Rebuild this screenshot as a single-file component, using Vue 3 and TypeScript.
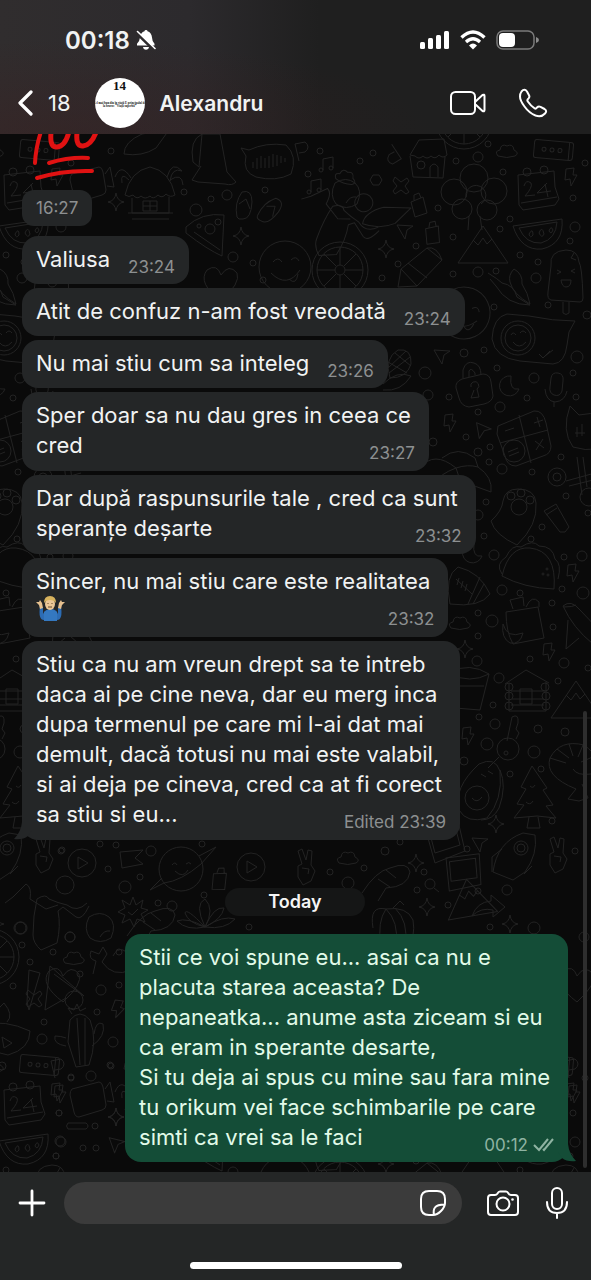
<script setup lang="ts">
interface Message {
  lines: string[]
  time: string
  edited?: boolean
  shrug?: boolean
}

const received: Message[] = [
  { lines: ['Valiusa'], time: '23:24' },
  { lines: ['Atit de confuz n-am fost vreodată'], time: '23:24' },
  { lines: ['Nu mai stiu cum sa inteleg'], time: '23:26' },
  { lines: ['Sper doar sa nu dau gres in ceea ce', 'cred'], time: '23:27' },
  { lines: ['Dar după raspunsurile tale , cred ca sunt', 'speranțe deșarte'], time: '23:32' },
  { lines: ['Sincer, nu mai stiu care este realitatea', ''], time: '23:32', shrug: true },
  {
    lines: [
      'Stiu ca nu am vreun drept sa te intreb',
      'daca ai pe cine neva, dar eu merg inca',
      'dupa termenul pe care mi l-ai dat mai',
      'demult, dacă totusi nu mai este valabil,',
      'si ai deja pe cineva, cred ca at fi corect',
      'sa stiu si eu...',
    ],
    time: '23:39',
    edited: true,
  },
]

const sent: Message = {
  lines: [
    'Stii ce voi spune eu... asai ca nu e',
    'placuta starea aceasta? De',
    'nepaneatka... anume asta ziceam si eu',
    'ca eram in sperante desarte,',
    'Si tu deja ai spus cu mine sau fara mine',
    'tu orikum vei face schimbarile pe care',
    'simti ca vrei sa le faci',
  ],
  time: '00:12',
}

const head = (m: Message): string => m.lines.slice(0, -1).join('\n')
const tail = (m: Message): string => m.lines[m.lines.length - 1]

/* Wallpaper: line doodles centred on their own origin, repeated as a tile. */
const ring = (x: number, y: number, r: number): string =>
  `M${x - r} ${y}a${r} ${r} 0 1 0 ${2 * r} 0a${r} ${r} 0 1 0 ${-2 * r} 0`

const shapes: Record<string, string> = {
  star: 'M0-9Q1-1 8 0Q1 1 0 9Q-1 1-8 0Q-1-1 0-9Z',
  bolt: 'M-5-8L3-9L2-2L6-2L0 9L-1 2L-6 3Z',
  cursor: 'M-8-6L8-5L2-1L0 8Z',
  cloud: 'M-9 5Q-13 0-7-1Q-6-8 0-5Q6-8 7-1Q13 2 8 5Q0 8-9 5Z',
  moon: 'M2-9A10 10 0 1 0 10 4Q0 6 2-9Z',
  note: 'M-4 5V-6L6-8V3' + ring(-6, 5, 2) + ring(4, 3, 2),
  cross: 'M-6-9L0-4L6-8L8-5L4 0L8 6L5 8L0 4L-6 8L-8 5L-4 0L-8-5Z',
  hex: 'M-3-5L3-5L6 0L3 5L-3 5L-6 0Z',
  box: 'M-17-9Q-19-9-19-6V7Q-19 9-17 9H17Q20 9 20 6V-7Q20-9 17-9ZM16-9V9' + ring(-9, 0, 2) + ring(-1, 0, 2) + ring(7, 0, 2),
  calendar:
    'M-19-16L17-20L18-4L22 8L18 14L-14 19L-18 14ZM-16 12L20 6M-13-5Q-11-12-6-8Q-4-4-12 5L-2 4M10-8L0 2L14 0M8-7L11 6' +
    ring(-10, -19, 4) + ring(7, -21, 4),
  melon: 'M-25-4L24-11Q26 14 4 19Q-17 21-25-4ZM-19-2L19-8Q18 9 3 13Q-12 14-19-2M-9 4Q-5-3-5 5Q-8 9-9 4M1 3Q4-5 6 4Q4 9 1 3M11 1Q13-5 15 0Q13 5 11 1',
  hut: 'M-25 6Q-20-18 0-22Q20-18 25 6Q20 9 16 5Q12 10 8 6Q3 11 0 7Q-5 11-9 7Q-13 11-17 6Q-21 9-25 6M-18 9V24H19V8M-22 24H23M-18 30H19M-7 12H7V22H-7ZM0 12V22M-7 17H7M-21-9Q-30-18-28-6M-19-11Q-29-27-35-12M17-12Q22-29 32-18Q22-22 20-8M20-9Q32-17 33-4',
  tree: ring(0, -14, 14) + ring(-20, 0, 13) + ring(20, -1, 13) + ring(-12, 17, 10) + ring(13, 18, 10) + 'M-8 5A10 10 0 1 1 7 12M-5 24L-6 38M6 24L8 38',
  slice: 'M-18 10Q-18-2 0-10L27-14L14 4Q0 13-18 10Z',
  wave: 'M-25-12L-17-10Q0-18 20-15Q32-4 25 14Q10 22-10 17Q-24 12-20-4ZM-13 2V8M-9-2V9M-5-4V8M-1-2V8M3-4V8M7-6V7M11-5V6M15-4V3M19-2V2',
  dress: 'M-10-28Q-23-22-19 0L-13 5L-10-28L8-28L15 10L24 20Q20 24 13 22L-14 20L-20 18L-11 4',
  shop: 'M-17-1L-8-16L17-17L20-1Q16 3 12-1Q8 4 4 0Q0 4-4 0Q-8 4-12 0ZM-17 0L-14 21L16 22L18 1M3 21V11Q7 5 11 11V21' + ring(-6, 9, 4),
  wheel: ring(0, 0, 28) + ring(0, 0, 23) + ring(0, 0, 5) + 'M0-23V-5M0 5V23M-23 0H-5M5 0H23M-16-16L-4-4M16-16L4-4M-16 16L-4 4M16 16L4 4',
  pencil: 'M-22 19L-19 1L7-20Q17-22 22-8L-3 18ZM-19 1L-3 18M7-20L22-8M-12-5L7 10',
  peak: 'M-25 17L0-20L25 17ZM-10-6L-5-1L0-8L4-2L9-7',
  pop: 'M-15-12Q-17-27 0-28Q12-28 13-16Q16-12 17 20Q17 24 14 24L-15 22Q-19 21-18 14ZM-3 24V35Q0 38 3 35V24M-9-8L-5-6L-9-4M9-9L5-7L9-5M-5 2H5Q5 9 0 9Q-4 9-5 2M8-25L5-20L10-18',
  chili: 'M-24-14Q-14-8-10-4Q2-2 5 10L18 18Q-5 18-16-1L-22-8M2-18Q11-13 10-3Q16 6 18 17Q1 7-2-5Q-4-12 2-18Z',
  face: ring(0, 0, 26) + 'M-12-5Q-7-11-3-5M6-7Q11-12 14-6M-14 6Q2 22 15 3M4 12Q11 19 13 7',
  chat: 'M-26-23Q-40-20-41 2Q-38 21-13 24L20 27Q32 26 34 8L36-5L42-16Q20-16-4-21Z' + ring(-15, 1, 17) + ring(-15, 1, 13) + 'M-22-2Q-20-6-17-2M-13-4Q-10-8-7-4M-20 5Q-14 13-7 5M6 17L10 21L17 14M12 19L20 13',
  corn: 'M-9 12Q-15-8-1-16Q13-18 12-2Q8 12-9 12M-11 2L7-15M-10 7L11-9M-11-4L8 7M-4-13L12 0M-16 18Q-2 4 12 10Q2 26-16 24',
  lock: 'M-18 1Q-19-5-12-8L9-13Q16-13 17-5L19 9Q18 15 10 17L-5 20Q-13 19-15 11ZM-11-9V-17Q-8-27 0-24Q7-22 7-12M-5-10V-16Q-3-20 1-14V-12M-3 0A4 4 0 1 1 3 2L5 10L-3 11L0 3',
  mic: 'M-6-9Q-5-15 1-14Q7-13 6-6L5 4Q3 10-3 8Q-8 6-7 0ZM-12 2Q-11 14-2 15Q8 14 10 4M-3 15V20',
  calc: 'M-27-10L9-25Q18-26 21-13L26 10Q26 18 18 20L-9 30Q-18 30-20 20L-28-2ZM-6-21L6 27M-25 7L23-6M9-13L18-16M12-19L15-9M10 5L19 12M18 3L11 14M-20-5L-11-8M-17 16L-7 12M-16 20L-6 16' + ring(-11, 15, 11),
  cat: 'M-18 16Q-30 0-21-25L-12-16Q0-19 10-16L19-24L20 8Q8 24-18 16M-14-4V6M-9-7V5M-16 2L-6 2',
  brolly: 'M-38 0Q-24-18-2 0Q-18 6-22 14M-16-10Q0-23 17-10L20-1Q10-4-2 0M20-1Q35 9 33 24L0 12M-2 0L8 30',
  paw: 'M-22 8Q-11-2-10-12Q-8-24 5-24Q22-24 23-10Q25 12 4 32Q-18 22-22 8Z' + ring(6, -6, 8) + ring(-2, -17, 4) + ring(8, -20, 4) + ring(17, -13, 4),
  skate: ring(-20, 0, 9) + ring(-20, 0, 4) + ring(12, 20, 9) + 'M-11 4L18-4M-8 9L16 3M0-20L5 18M6-20L10 10',
  tube: 'M-12-7L0-14L13 9L9 14L4 14ZM-10-3L1-10',
  rugby: 'M-16 12Q-22-16-8-25Q14-20 24 2Q14 16-16 12M2 12L14-15M7 12L18-8M-10-13L6 2M-7-14L-9-7M-3-11L-5-4M1-8L-1-1',
  taco: 'M-27 5Q-20-25 1-23Q28-20 25 18Q-5 17-27 5ZM-27 3Q-34-7-23-14Q-17-27-8-24Q4-32 10-25Q24-25 26-12Q33-7 29 8' + ring(14, 3, 1) + ring(18, -2, 1) + ring(19, 4, 1),
  bag: 'M-17-12L15-17L21 14L-10 20Q-17 8-17-12M-10-15L-13-24L0-27L1-18M3-17Q9-30 16-22V-17M-20 0Q-16 15 0 9Q-3 21-13 19Q-22 14-20 0',
  plane: 'M-20-18Q-12-25-3-14L18 8L28 28L10 20Q-10 4-20-18ZM-15-4L-17 25L-4 14M-19-17Q-10-17-7-19',
  cabin: 'M-21-8L0-22L23-9M-17-9V19H20V-10M-15-1H19M-14 7H18M-15 13H18M-6-3H6V12H-6Z' + ring(-17, -5, 4) + ring(-17, 4, 4) + ring(-17, 14, 4) + ring(19, -5, 4) + ring(20, 4, 4) + ring(20, 14, 4),
  bucket: 'M-20-14Q0-24 19-12L10 24L-15 22ZM-20-12Q0-2 19-12M-18 0H14',
  key: 'M-4 0L1-24Q8-28 7-18L5-12L8-8L5-2' + ring(-3, 8, 11) + ring(-5, 12, 2) + 'M-12 16L-23 27',
  avocado: 'M-20 24Q-26 2 0-22Q16-30 21-15Q24 14 8 32Q-12 38-20 24ZM21-16Q28 0 20 22Q14 34 2 34M2-12L7-9M9-15L14-12' + ring(-2, 12, 12) + 'M-7 12Q-2 18 3 11',
  pine: 'M0-28L15-6L11-4L21 11L14 12L24 24L5 22L-18 24L-8 11L-15 10L-6-5L-11-7ZM-3 23L-5 34H8L6 23M-2-8Q1-5 3-9M-6 8Q-2 12 1 7',
  shrimp: 'M5 18Q-27 5-21-13Q-11-32 13-26Q33-12 20 3Q6 5 2-2M5 18L-3 28L8 30L17 27L11 13M-21-13L-5-8M-14-22L-2-13M-2-27L2-15M12-26L7-14M24-15L10-9',
  rocket: 'M-24 18Q-20-12 6-21L18-19Q21 0 8 18L-4 26ZM-15-5L-25 3V18M7 20L15 12' + ring(4, -6, 7) + ring(4, -6, 4),
  peace: 'M-8 10L-8-1L-4-3L-8-16L-4-18L0-7L2-17L6-16L5-2L9 4L5 14L-3 18ZM-4 1L3 2L2 7',
  photo: 'M-18-10L14-20L21 10L-9 22ZM-14-7L11-15L16 4L-9 12Z',
  flag: 'M-11-8L12-10L4-2L12 4L-9 8Z',
  planet: ring(0, 0, 22) + 'M-17 14L-31 21L-19 9M18-13L35-22L20-5Q0 12-17 14M-9-4Q-6-8-4-4M5-5Q8-8 10-5M-6 2Q2 10 7 1',
  play: ring(0, 0, 14) + 'M-4-6L6 0L-4 6Z',
  burst: 'M0-15L3-7L10-12L8-4L15-2L8 2L12 10L4 7L1 15L-3 7L-11 11L-8 3L-15 0L-8-4L-11-12L-3-7ZM-5 0L-1 3L5-3',
  plant: 'M0 12Q-18 2-28 6Q-18 16 0 12M0 12Q-19-8-20-2Q-17 8 0 12M0 12Q-11-11 0-16Q10-6 0 12M0 12Q9-9 19-7Q17 4 0 12M0 12Q18 0 30 4Q20 15 0 12',
  runner: 'M-42-8L-34-14L-21-27Q-15-24-17-12L-1-2L11-6M-14 24Q-14 4-10-12Q-1-18 2-12Q11-8 20-6Q30 2 40-8M-14 24Q-14 32-6 39L10 32Q14 15 11 0L16-4L29 6Q35 10 42-5' + ring(18, -26, 9),
  apple: 'M-11-12Q0-19 9-12Q17-5 11 9Q0 16-10 9Q-17 0-11-12M0 8Q4 1 10 2',
  whale: 'M-20 12L-17-1Q-25-3-22-11L-14-8L-10-15L-6-8L-11 0Q0 16 18 8Q22-8 10-12Q4-14 0-6',
  fans: 'M-25-22L-14-19L-25 18L-27 10ZM-9 18L-4-26L30 4L0-18M-9 18L12 6' + ring(20, 8, 9),
  cactus: 'M-10-20Q0-32 10-20Q18 0 9 25L-4 27L-12 2ZM-3-22L0 25M5-22L5 25M-14 6Q-27 4-25-4Q-19-4-14-2M14-6Q16-20 23-16Q26-4 12 6M-8-26L-12-32L-6-30L-3-36L0-29L6-32',
  drop: 'M-20-6Q0-12 26 0Q26 18 4 24L-12 20ZM-6-10Q-10-20 0-28Q10-16 3-9M-2 6L8 12L0 17Z',
  video: 'M-16-10L11-17Q14-17 15-12L18 6Q18 10 14 11L-9 18Q-13 18-14 13L-18-4Q-18-8-16-10M17-10L22-17L26 3L19 2',
  pumpkin: 'M-20 6Q-24-17-7-13Q14-16 20-2Q23 16 14 22M-7-13Q-16 0-12 22M-7-13Q6 0 3 22M2-14Q16 0 12 22M0-14L7-21L11-17',
  lens: ring(0, 0, 5) + 'M4 4L9 8',
  arrow: 'M-14 10Q-9-4 5-5V-11L19 1L7 11V4Q-5 1-14 10Z',
  sandal: 'M-7 12Q-10-2-2-13Q8-16 8-3Q7 14-1 14Q-6 15-7 12M-5-1L2-6L6 4',
  pizza: 'M-22-10Q-6-25 16-22L14 19Q0 13-22-4ZM-14-5L12 13' + ring(2, -8, 5) + ring(-9, -11, 2),
  heart: 'M0 18Q-24 0-14-13Q-4-20 0-8Q8-20 16-10Q20 0 0 18Z',
  perfume: 'M-7-3L5-8L9 8L-3 12ZM-4-5L-4-10L1-12L3-7',
  letter: 'M-4 9L-8-8L2-10Q8-5 2 0L-4 1',
  pill: 'M-10-3H8Q12 0 8 3H-10Q-13 0-10-3',
  shoe: 'M-28 12Q-14-10 0-13Q18-20 20-9Q18 6-4 7L-12 20M-12-2L0 6M-4-11L6-3',
}

type Spot = [name: string, x: number, y: number, turn?: number]

const spots: Spot[] = [
  ['box', 553, 151, 5], ['calendar', 537, 192], ['melon', 538, 231], ['hut', 150, 190], ['tree', 474, 193],
  ['bolt', 571, 178], ['slice', 142, 145], ['wave', 266, 161], ['dress', 212, 163], ['shop', 427, 157],
  ['wheel', 464, 122], ['note', 327, 166], ['note', 315, 188], ['letter', 303, 153], ['letter', 391, 155, 160],
  ['hex', 376, 181], ['cross', 401, 187], ['cloud', 507, 152], ['perfume', 418, 206], ['cloud', 346, 178, 20],
  ['apple', 346, 196], ['slice', 382, 218, 10], ['runner', 338, 222, 20],
  ['star', 116, 203], ['star', 241, 237], ['sandal', 244, 206], ['sandal', 270, 211, 35], ['video', 88, 185],
  ['pizza', 208, 238], ['heart', 221, 284], ['face', 285, 268], ['wheel', 340, 271], ['pencil', 420, 269],
  ['peak', 483, 247], ['pop', 566, 279], ['chili', 512, 288], ['face', 464, 314, 20], ['chat', 533, 338],
  ['star', 386, 250], ['cursor', 405, 232], ['perfume', 432, 234, 10], ['corn', 399, 367], ['cursor', 442, 357], ['lock', 474, 388],
  ['moon', 509, 386], ['mic', 557, 388], ['bolt', 450, 424], ['cursor', 482, 432, 20], ['calc', 525, 437],
  ['cat', 591, 432], ['brolly', 458, 469], ['skate', 577, 478], ['paw', 513, 514], ['tube', 556, 519],
  ['rugby', 466, 593], ['moon', 472, 553], ['taco', 529, 572], ['bag', 523, 625], ['plane', 583, 625],
  ['bolt', 573, 574], ['bolt', 549, 653], ['star', 465, 650], ['cloud', 460, 624], ['bucket', 470, 687],
  ['cabin', 526, 693], ['peak', 576, 702], ['bolt', 468, 737], ['key', 511, 742], ['avocado', 479, 787],
  ['pine', 532, 795], ['shrimp', 571, 772], ['star', 496, 825], ['cursor', 480, 845], ['rocket', 517, 855],
  ['peace', 558, 856], ['photo', 444, 842], ['star', 416, 864], ['cloud', 348, 859], ['peace', 306, 868],
  ['photo', 462, 872, 10], ['lens', 430, 885], ['peak', 470, 900, -10], ['arrow', 486, 907], ['star', 427, 908],
  ['star', 510, 925], ['shoe', 390, 882], ['pumpkin', 393, 923], ['runner', 47, 912], ['play', 82, 864],
  ['flag', 131, 861], ['planet', 181, 870], ['play', 251, 868], ['perfume', 219, 880, 20], ['burst', 133, 913],
  ['plant', 205, 916], ['apple', 100, 930], ['wheel', -9, 958], ['cloud', 74, 959], ['whale', 113, 963],
  ['fans', 54, 993], ['cactus', 80, 1041], ['drop', 4, 1032], ['cursor', 116, 1146, 10], ['star', 116, 1118],
  ['pill', 78, 1127], ['shoe', 155, 925], ['bolt', 118, 1010, 15], ['cross', 548, 1000],
  ['letter', 573, 1070], ['bolt', 574, 1095], ['heart', 577, 985],
]

const dots: [number, number, number][] = [
  [320, 152, 3], [373, 154, 3], [360, 162, 3], [308, 175, 3], [488, 145, 3], [478, 158, 5], [456, 162, 3], [503, 173, 3],
  [585, 164, 3], [573, 199, 3], [575, 228, 5], [510, 220, 3], [500, 230, 3], [438, 209, 3], [184, 193, 3], [211, 200, 3],
  [227, 196, 5], [196, 211, 6], [218, 223, 3], [265, 191, 3], [111, 152, 3], [416, 247, 3], [453, 238, 3], [382, 279, 3],
  [398, 265, 3], [453, 275, 3], [478, 273, 5], [496, 272, 3], [520, 256, 3], [538, 263, 3], [536, 279, 5], [494, 308, 3],
  [548, 306, 3], [570, 242, 3], [587, 316, 4], [233, 258, 5], [253, 264, 3], [263, 281, 3], [425, 374, 6], [464, 354, 4],
  [484, 351, 3], [497, 369, 3], [534, 379, 5], [573, 374, 3], [577, 358, 6], [576, 398, 3], [527, 399, 3], [428, 396, 5],
  [449, 398, 3], [500, 408, 5], [478, 413, 3], [466, 438, 3], [433, 443, 4], [490, 448, 3], [478, 453, 4], [502, 470, 5],
  [489, 463, 3], [561, 458, 3], [532, 473, 3], [486, 503, 3], [478, 516, 5], [484, 537, 3], [566, 497, 3], [588, 514, 3],
  [542, 528, 3], [531, 540, 3], [494, 556, 5], [564, 558, 3], [582, 557, 5], [502, 591, 5], [520, 594, 3], [562, 590, 3],
  [583, 594, 6], [552, 604, 3], [478, 614, 3], [492, 622, 6], [553, 628, 3], [478, 637, 3], [530, 660, 3], [564, 664, 5],
  [477, 662, 5], [588, 669, 3], [499, 679, 5], [558, 682, 3], [493, 706, 3], [479, 718, 3], [495, 725, 5], [538, 730, 4],
  [565, 733, 4], [487, 745, 6], [534, 753, 6], [510, 775, 3], [541, 770, 3], [464, 762, 4], [552, 822, 3], [467, 850, 3],
  [575, 852, 3], [385, 852, 4], [400, 843, 3], [100, 845, 3], [116, 846, 3], [62, 851, 3], [151, 852, 5], [202, 845, 3],
  [108, 870, 3], [140, 878, 3], [125, 888, 6], [158, 904, 3], [172, 907, 5], [204, 896, 3], [249, 928, 3], [330, 873, 3],
  [364, 869, 3], [348, 884, 6], [417, 891, 3], [424, 873, 3], [478, 892, 3], [507, 891, 5], [448, 906, 3], [490, 928, 3],
  [534, 929, 6], [21, 929, 6], [70, 938, 5], [22, 946, 3], [53, 953, 3], [119, 953, 3], [30, 963, 3], [80, 975, 3],
  [13, 987, 3], [101, 991, 5], [119, 986, 3], [97, 1013, 3], [44, 1023, 3], [42, 1040, 5], [113, 1043, 5], [110, 1066, 3],
  [71, 1078, 3], [91, 1077, 5], [2, 1067, 4], [59, 1114, 3], [95, 1127, 3], [60, 1142, 5], [83, 1149, 3], [96, 1149, 3],
  [56, 1157, 3], [584, 938, 5],
]

const copies = [
  { x: 0, y: 0 },
  { x: -514, y: 0 },
  { x: 0, y: 915 },
  { x: -514, y: 915 },
]
</script>

<template>
  <div class="phone">
    <header class="top">
      <div class="status">
        <div class="clock">
          <span>00:18</span>
          <svg width="20" height="22" viewBox="0 0 20 22" aria-label="Silent">
            <path d="M10 1Q11.500 1 11.500 2.300Q15.500 3.500 16 8.500Q16 12 18.500 14.800V16.500H1V14.800Q3.700 12 4 8.500Q4.500 3.500 8.500 2.300Q8.500 1 10 1ZM7 18H13Q12.500 20.800 10 20.800Q7.500 20.800 7 18Z" fill="#fff" />
            <path d="M0 3.500L18.500 21.500" stroke="#2e2b2d" stroke-width="3" />
            <path d="M1.500 2.500L19 19.500" stroke="#fff" stroke-width="1.600" stroke-linecap="round" />
          </svg>
        </div>
        <div class="signals">
          <svg width="30" height="20" viewBox="0 0 30 20" fill="#fff" aria-label="Signal">
            <rect x="0" y="12" width="5" height="7" rx="1.500" />
            <rect x="8" y="8" width="5" height="11" rx="1.500" />
            <rect x="16" y="5" width="5" height="14" rx="1.500" />
            <rect x="24" y="1" width="5" height="18" rx="1.500" />
          </svg>
          <svg width="26" height="20" viewBox="0 0 26 20" fill="none" stroke="#fff" aria-label="Wi-Fi">
            <path d="M1.500 7.500Q13-3.500 24.500 7.500" stroke-width="3.400" />
            <path d="M6 12Q13 5.500 20 12" stroke-width="3.200" />
            <path d="M9 15.500Q13 11.500 17 15.500L13 19.500Z" fill="#fff" stroke="none" />
          </svg>
          <svg width="43" height="20" viewBox="0 0 43 20" aria-label="Battery">
            <rect x="1" y="1" width="37" height="18" rx="6" fill="none" stroke="#7b7b7b" stroke-width="1.500" />
            <rect x="3" y="3" width="16" height="14" rx="4" fill="#fff" />
            <path d="M40 7Q43 8 43 10Q43 12 40 13Z" fill="#8b8b8b" />
          </svg>
        </div>
      </div>
      <nav class="bar">
        <button class="back" type="button" aria-label="Back">
          <svg width="17" height="28" viewBox="0 0 17 28" fill="none" stroke="#fff" stroke-width="3.200" stroke-linecap="round" stroke-linejoin="round">
            <path d="M13 3L2 14L13 25" />
          </svg>
          <span>18</span>
        </button>
        <button class="contact" type="button">
          <span class="avatar" aria-hidden="true">
            <b>14</b>
            <small>Cel mai bun din în viață E principalul de<br />la bravo: “Viață superbă”</small>
          </span>
          <span class="name">Alexandru</span>
        </button>
        <button class="call" type="button" aria-label="Video call">
          <svg width="36" height="24" viewBox="0 0 36 24" fill="none" stroke="#fff" stroke-width="2" stroke-linejoin="round">
            <rect x="1" y="1" width="24" height="22" rx="4.500" />
            <path d="M25 11L32.500 4Q34.500 3 34.500 5V19Q34.500 21 32.500 20L25 13Z" />
          </svg>
        </button>
        <button class="call" type="button" aria-label="Voice call">
          <svg width="30" height="30" viewBox="0 0 30 30" fill="none" stroke="#fff" stroke-width="2" stroke-linejoin="round">
            <path d="M3.500 3.500Q6.500 0 9 3.500L11 7.200Q12 9 10.500 10.500Q8.700 12 9.800 13.500Q12.500 17.500 16.500 20.300Q17.800 21.200 19 19.500Q20.500 17.800 22.500 18.800L26.500 21Q29.500 23 27 25.500Q23.500 29.500 17.500 27.500Q11 24.800 6.500 18.500Q2 12.500 2 8.500Q2 5.500 3.500 3.500Z" />
          </svg>
        </button>
      </nav>
    </header>

    <main class="chat">
      <svg class="wallpaper" aria-hidden="true">
        <defs>
          <g id="tile">
            <path
              v-for="(s, i) in spots"
              :key="i"
              :d="shapes[s[0]]"
              :transform="`translate(${s[1]} ${s[2] - 135}) rotate(${s[3] ?? 0})`"
            />
            <circle v-for="(d, i) in dots" :key="'d' + i" :cx="d[0]" :cy="d[1] - 135" :r="d[2]" />
          </g>
        </defs>
        <use v-for="(c, i) in copies" :key="i" href="#tile" :x="c.x" :y="c.y" />
      </svg>

      <div class="thread">
        <div class="sticker">
          <svg width="72" height="60" viewBox="0 0 72 60" fill="none" stroke="#e01212" stroke-linecap="round" role="img" aria-label="100">
            <path d="M12 4Q5 22 4 41" stroke-width="4" />
            <path d="M21 4Q17 26 26 25Q36 24 39 4" stroke-width="5" />
            <path d="M47 4Q43 25 52 24Q62 23 67 4" stroke-width="5" />
            <path d="M18 41Q38 35 57 36" stroke-width="4" />
            <path d="M6 56Q32 48 61 49" stroke-width="4" />
          </svg>
          <time class="chip">16:27</time>
        </div>

        <article
          v-for="(m, i) in received"
          :key="i"
          class="bubble"
          :class="{ multi: m.lines.length > 1 }"
        >
          <p v-if="m.lines.length > 1" class="text">{{ head(m) }}</p>
          <div class="ending">
            <svg v-if="m.shrug" class="shrug" width="30" height="26" viewBox="0 0 30 26" role="img" aria-label="Man shrugging">
              <path d="M4 10Q2 24 8 24L12 19H17L21 24Q27 24 25 10L22 12V18Q20 13 15 13Q9 13 7 18V12Z" fill="#2c6cb4" />
              <path d="M8 16Q15 11 21 16V25H8Z" fill="#3478c0" />
              <path d="M0 6L3 6L4 4L6 7L7 12L4 13L3 9ZM29 6L26 6L25 4L23 7L22 12L25 13L26 9Z" fill="#e6c08f" />
              <ellipse cx="14" cy="8" rx="5" ry="6" fill="#ebc696" />
              <path d="M8 7Q8 0 14 0Q20 0 20 7L18 5Q14 3 10 5Z" fill="#d8b35e" />
              <path d="M12 7V8M16 7V8M12 11H16" stroke="#674a2c" stroke-width="1" />
            </svg>
            <p v-else class="text">{{ tail(m) }}</p>
            <span class="meta"><template v-if="m.edited">Edited </template>{{ m.time }}</span>
          </div>
          <svg v-if="i === received.length - 1" class="tail tail-in" width="18" height="18" viewBox="0 0 18 18">
            <path d="M8 0Q7 10 0 17Q9 18 14 14L18 8V0Z" fill="#242627" />
          </svg>
        </article>

        <h2 class="day">Today</h2>

        <article class="bubble multi mine">
          <p class="text">{{ head(sent) }}</p>
          <div class="ending">
            <p class="text">{{ tail(sent) }}</p>
            <span class="meta">
              <span>{{ sent.time }}</span>
              <svg width="21" height="14" viewBox="0 0 21 14" fill="none" stroke="#8fb3a2" stroke-width="2" aria-label="Delivered">
                <path d="M1 7L6 12L15 1M10 11L11 12L20 1" />
              </svg>
            </span>
          </div>
          <svg class="tail tail-out" width="18" height="18" viewBox="0 0 18 18">
            <path d="M10 0Q11 10 18 17Q9 18 4 14L0 8V0Z" fill="#144d37" />
          </svg>
        </article>
      </div>
      <div class="scrollbar" />
    </main>

    <footer class="bottom">
      <form class="composer" @submit.prevent>
        <button type="button" aria-label="Attach">
          <svg width="28" height="28" viewBox="0 0 28 28" stroke="#fff" stroke-width="2.800" stroke-linecap="round">
            <path d="M14 2V26M2 14H26" />
          </svg>
        </button>
        <div class="field">
          <input type="text" aria-label="Message" />
          <button type="button" aria-label="Stickers">
            <svg width="26" height="26" viewBox="0 0 26 26" fill="none" stroke="#fff" stroke-width="2" stroke-linejoin="round">
              <path d="M25 13V9Q25 1 17 1H9Q1 1 1 9V17Q1 25 9 25H13Q17 25 21 21Q25 17 25 13ZM14 25Q13 20 15 17.500Q17 14.500 25 14.500" />
            </svg>
          </button>
        </div>
        <button type="button" aria-label="Camera">
          <svg width="32" height="26" viewBox="0 0 32 26" fill="none" stroke="#fff" stroke-width="2" stroke-linejoin="round">
            <path d="M4 5H8Q9.500 5 10.500 3.500Q11.500 1.500 13 1.500H19Q20.500 1.500 21.500 3.500Q22.500 5 24 5H28Q31 5 31 8V22Q31 25 28 25H4Q1 25 1 22V8Q1 5 4 5Z" />
            <circle cx="16" cy="14" r="6.500" />
            <circle cx="25.500" cy="9.500" r="1.300" fill="#fff" stroke="none" />
          </svg>
        </button>
        <button type="button" aria-label="Voice message">
          <svg width="22" height="32" viewBox="0 0 22 32" fill="none" stroke="#fff" stroke-width="2" stroke-linecap="round">
            <rect x="6" y="1" width="10" height="21" rx="5" />
            <path d="M1 15Q1 26 11 26Q21 26 21 15M11 26V31" />
          </svg>
        </button>
      </form>
      <div class="home" />
    </footer>
  </div>
</template>

<style>
html,
body,
#app {
  height: 100%;
  background: #0a0a0a;
}
body {
  margin: 0;
}
</style>

<style scoped>
.phone {
  display: flex;
  flex-direction: column;
  height: 100%;
  color: #f1f3f3;
  font-family: Inter, Roboto, "Liberation Sans", sans-serif;
}
button {
  display: flex;
  align-items: center;
  padding: 0;
  border: 0;
  background: none;
  color: inherit;
  font: inherit;
}
svg {
  display: block;
  flex: none;
}
.top {
  background:
    radial-gradient(ellipse at 10% 100%, rgba(60, 28, 28, 0.4), transparent 50%),
    linear-gradient(90deg, #302d2e 0%, #2c2a2d 32%, #1f1f1f 54%);
}
.status {
  display: flex;
  align-items: center;
  justify-content: space-between;
  height: 64px;
  padding: 8px 52px 0 65px;
}
.clock {
  display: flex;
  align-items: center;
  gap: 6px;
  font-size: 24px;
  font-weight: 600;
}
.signals {
  display: flex;
  align-items: center;
  gap: 10px;
}
.bar {
  display: flex;
  align-items: center;
  height: 62px;
  padding: 0 43px 0 18px;
}
.back {
  gap: 13px;
  margin-right: 24px;
  font-size: 22px;
}
.contact {
  flex: 1;
  gap: 15px;
}
.avatar {
  display: flex;
  flex-direction: column;
  align-items: center;
  gap: 8px;
  width: 50px;
  height: 50px;
  overflow: hidden;
  border-radius: 50%;
  background: #fff;
  color: #111;
  font-family: "Liberation Serif", serif;
}
.avatar b {
  font-size: 13px;
  line-height: 16px;
}
.avatar small {
  font-size: 3px;
  font-weight: 700;
  line-height: 3px;
  text-align: center;
  white-space: nowrap;
}
.name {
  font-size: 21px;
  font-weight: 600;
}
.call + .call {
  margin-left: 32px;
}
.chat {
  position: relative;
  display: flex;
  flex: 1;
  flex-direction: column;
  justify-content: flex-end;
  min-height: 0;
  overflow: hidden;
  background: #0a0a0a;
}
.wallpaper {
  position: absolute;
  inset: 0;
  width: 100%;
  height: 100%;
  fill: none;
  stroke: #232323;
  stroke-width: 1;
  stroke-linejoin: round;
}
.thread {
  position: relative;
  display: flex;
  flex-direction: column;
  align-items: flex-start;
  gap: 4px;
  padding: 0 23px 10px 22px;
}
.sticker {
  display: flex;
  flex-direction: column;
  gap: 8px;
  margin-bottom: 6px;
}
.sticker svg {
  margin-left: 9px;
}
.chip {
  align-self: flex-start;
  padding: 0 14px;
  border-radius: 12px;
  background: #242627;
  color: #8d9091;
  font-size: 17px;
  line-height: 36px;
}
.bubble {
  position: relative;
  max-width: 100%;
  box-sizing: border-box;
  padding: 8px 14px 10px;
  border-radius: 16px;
  background: #242627;
}
.multi {
  padding-bottom: 11px;
}
.text {
  margin: 0;
  font-size: 22px;
  line-height: 30px;
  white-space: pre-line;
}
.multi > .text {
  padding-right: 4px;
}
.ending {
  display: flex;
  align-items: flex-start;
  justify-content: space-between;
  gap: 18px;
  height: 30px;
}
.meta {
  display: flex;
  align-items: center;
  align-self: flex-end;
  gap: 5px;
  margin-bottom: -3px;
  color: #8d9091;
  font-size: 17px;
  line-height: 20px;
  white-space: pre;
}
.mine {
  align-self: flex-end;
  padding-bottom: 10px;
  background: #144d37;
  color: #e2fbe9;
}
.mine .meta {
  color: #8fb3a2;
}
.tail {
  position: absolute;
  bottom: 0;
}
.tail-in {
  left: -8px;
}
.tail-out {
  right: -8px;
}
.day {
  align-self: center;
  width: 140px;
  margin: 44px 0 14px;
  border-radius: 14px;
  background: #151616;
  color: #f5f5f5;
  font-size: 18px;
  font-weight: 600;
  line-height: 28px;
  text-align: center;
}
.scrollbar {
  position: absolute;
  right: 4px;
  bottom: 4px;
  width: 4px;
  height: 44%;
  border-radius: 2px;
  background: #2e2e2e;
}
.bottom {
  display: flex;
  flex-direction: column;
  align-items: center;
  height: 108px;
  background: #242626;
}
.composer {
  display: flex;
  align-items: center;
  align-self: stretch;
  height: 62px;
  padding: 0 23px 0 18px;
}
.field {
  display: flex;
  flex: 1;
  align-items: center;
  min-width: 0;
  height: 42px;
  margin: 0 25px 0 18px;
  padding: 0 16px 0 20px;
  border-radius: 21px;
  background: #3b3b3b;
}
.field input {
  flex: 1;
  min-width: 0;
  border: 0;
  outline: 0;
  background: none;
  color: #fff;
  font: inherit;
  font-size: 22px;
}
.composer > button:last-child {
  margin-left: 27px;
}
.home {
  width: 212px;
  height: 7px;
  margin-top: 28px;
  border-radius: 4px;
  background: #fff;
}
</style>
